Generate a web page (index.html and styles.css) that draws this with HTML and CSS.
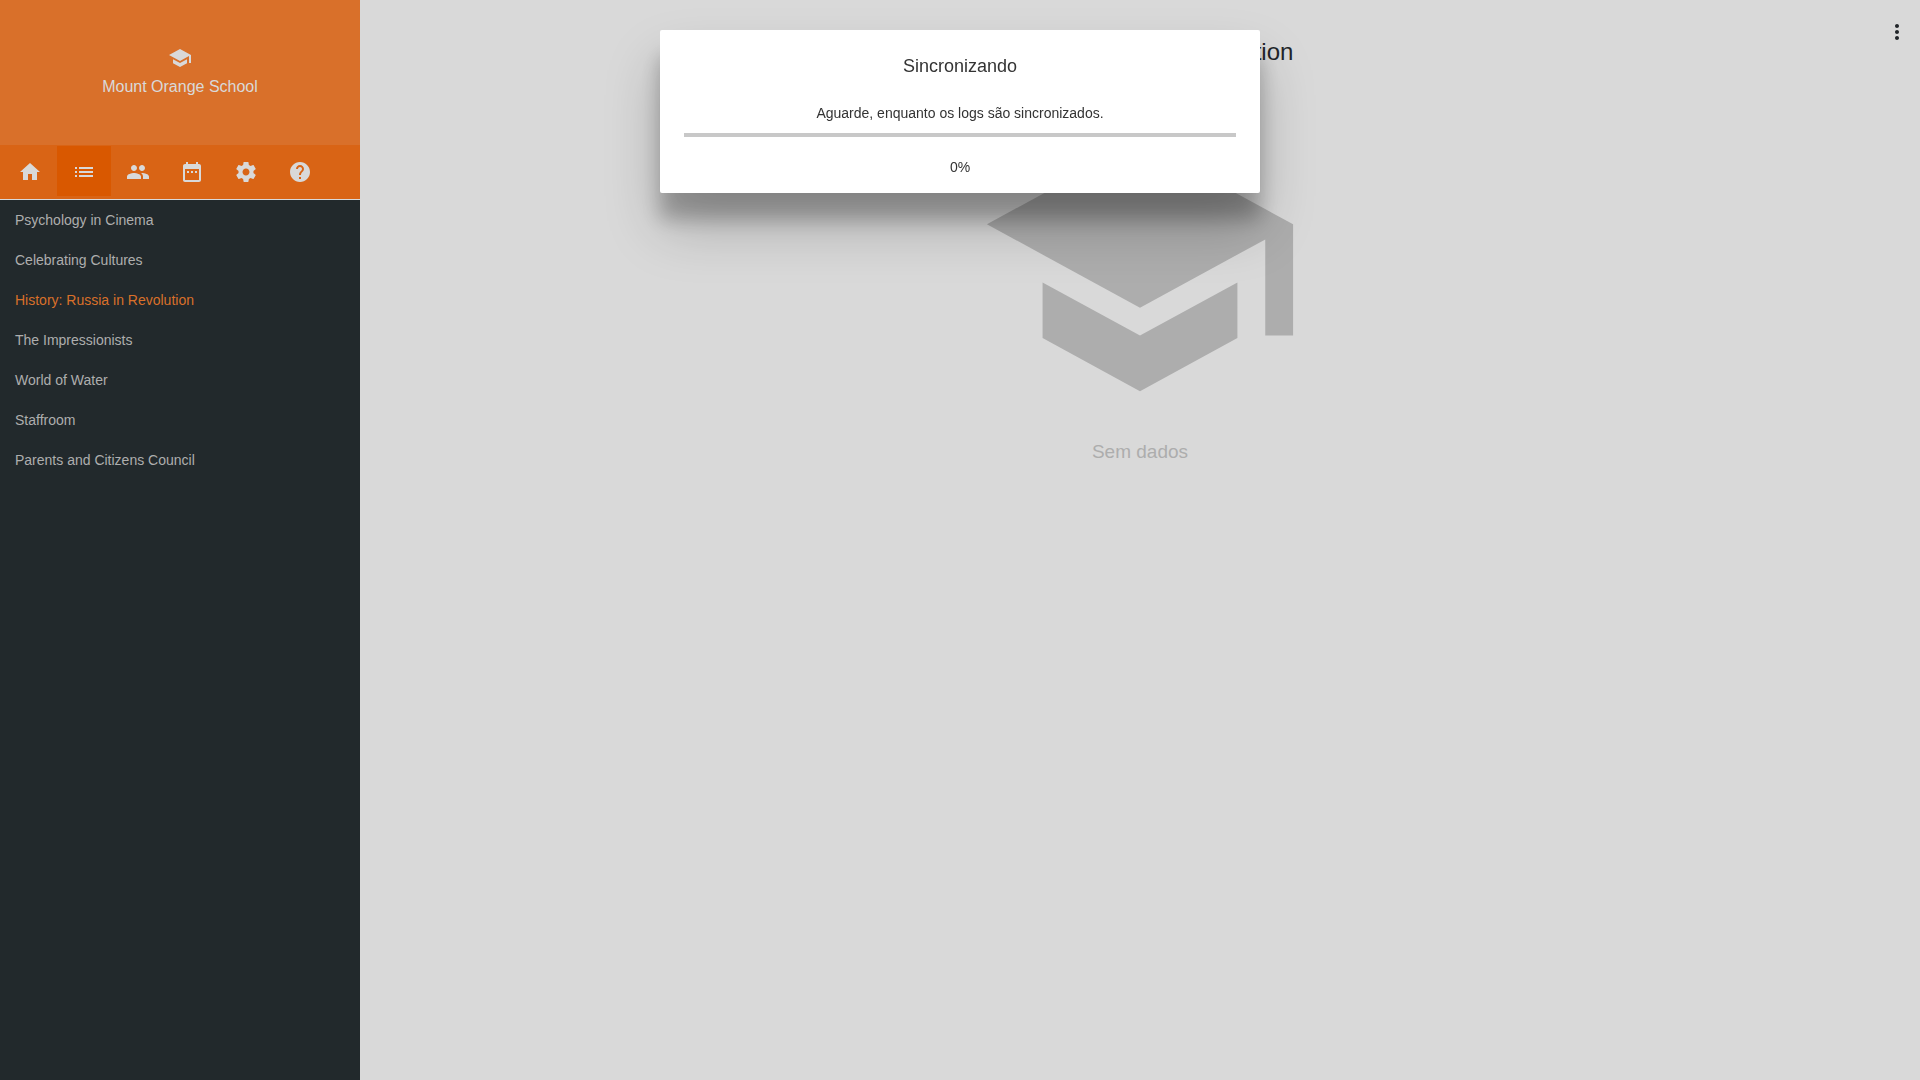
FILE: index.html
```html
<!DOCTYPE html>
<html lang="pt-BR">
<head>
<meta charset="utf-8">
<meta name="viewport" content="width=device-width, initial-scale=1">
<title>Mount Orange School</title>
<link rel="stylesheet" href="styles.css">
</head>
<body>
<div class="app">
  <aside class="sidebar">
    <header class="brand">
      <svg class="icon" viewBox="0 0 24 24" aria-hidden="true"><path d="M5 13.18v4L12 21l7-3.82v-4L12 17l-7-3.82zM12 3L1 9l11 6 9-4.91V17h2V9L12 3z"/></svg>
      <span class="brand-name">Mount Orange School</span>
    </header>
    <nav class="tabs" aria-label="Menu">
      <button class="tab" type="button" aria-label="Início"><svg class="icon" viewBox="0 0 24 24"><path d="M10 20v-6h4v6h5v-8h3L12 3 2 12h3v8z"/></svg></button>
      <button class="tab tab-active" type="button" aria-label="Cursos"><svg class="icon" viewBox="0 0 24 24"><path d="M3 13h2v-2H3v2zm0 4h2v-2H3v2zm0-8h2V7H3v2zm4 4h14v-2H7v2zm0 4h14v-2H7v2zM7 7v2h14V7H7z"/></svg></button>
      <button class="tab" type="button" aria-label="Participantes"><svg class="icon" viewBox="0 0 24 24"><path d="M16 11c1.66 0 2.99-1.34 2.99-3S17.66 5 16 5c-1.66 0-3 1.34-3 3s1.34 3 3 3zm-8 0c1.66 0 2.99-1.34 2.99-3S9.66 5 8 5C6.34 5 5 6.34 5 8s1.34 3 3 3zm0 2c-2.33 0-7 1.17-7 3.5V19h14v-2.5c0-2.33-4.67-3.5-7-3.5zm8 0c-.29 0-.62.02-.97.05 1.16.84 1.97 1.97 1.97 3.45V19h6v-2.5c0-2.33-4.67-3.5-7-3.5z"/></svg></button>
      <button class="tab" type="button" aria-label="Calendário"><svg class="icon" viewBox="0 0 24 24"><path d="M9 11H7v2h2v-2zm4 0h-2v2h2v-2zm4 0h-2v2h2v-2zm2-7h-1V2h-2v2H8V2H6v2H5c-1.11 0-1.99.9-1.99 2L3 20c0 1.1.89 2 2 2h14c1.1 0 2-.9 2-2V6c0-1.1-.9-2-2-2zm0 16H5V9h14v11z"/></svg></button>
      <button class="tab" type="button" aria-label="Configurações"><svg class="icon" viewBox="0 0 24 24"><path d="M19.43 12.98c.04-.32.07-.64.07-.98s-.03-.66-.07-.98l2.11-1.65c.19-.15.24-.42.12-.64l-2-3.46c-.12-.22-.39-.3-.61-.22l-2.49 1c-.52-.4-1.08-.73-1.69-.98l-.38-2.65C14.46 2.18 14.25 2 14 2h-4c-.25 0-.46.18-.49.42l-.38 2.65c-.61.25-1.17.59-1.69.98l-2.49-1c-.23-.09-.49 0-.61.22l-2 3.46c-.13.22-.07.49.12.64l2.11 1.65c-.04.32-.07.65-.07.98s.03.66.07.98l-2.11 1.65c-.19.15-.24.42-.12.64l2 3.46c.12.22.39.3.61.22l2.49-1c.52.4 1.08.73 1.69.98l.38 2.65c.03.24.24.42.49.42h4c.25 0 .46-.18.49-.42l.38-2.65c.61-.25 1.17-.59 1.69-.98l2.49 1c.23.09.49 0 .61-.22l2-3.46c.12-.22.07-.49-.12-.64l-2.11-1.65zM12 15.5c-1.93 0-3.5-1.57-3.5-3.5s1.57-3.5 3.5-3.5 3.5 1.57 3.5 3.5-1.57 3.5-3.5 3.5z"/></svg></button>
      <button class="tab" type="button" aria-label="Ajuda"><svg class="icon" viewBox="0 0 24 24"><path d="M12 2C6.48 2 2 6.48 2 12s4.48 10 10 10 10-4.48 10-10S17.52 2 12 2zm1 17h-2v-2h2v2zm2.07-7.75l-.9.92C13.45 12.9 13 13.5 13 15h-2v-.5c0-1.1.45-2.1 1.17-2.83l1.24-1.26c.37-.36.59-.86.59-1.41 0-1.1-.9-2-2-2s-2 .9-2 2H8c0-2.21 1.79-4 4-4s4 1.79 4 4c0 .88-.36 1.68-.93 2.25z"/></svg></button>
    </nav>
    <ul class="courses">
      <li><a class="course" href="#">Psychology in Cinema</a></li>
      <li><a class="course" href="#">Celebrating Cultures</a></li>
      <li><a class="course course-active" href="#">History: Russia in Revolution</a></li>
      <li><a class="course" href="#">The Impressionists</a></li>
      <li><a class="course" href="#">World of Water</a></li>
      <li><a class="course" href="#">Staffroom</a></li>
      <li><a class="course" href="#">Parents and Citizens Council</a></li>
    </ul>
  </aside>
  <main class="content">
    <button class="more" type="button" aria-label="Mais opções"><svg class="icon" viewBox="0 0 24 24"><path d="M12 8c1.1 0 2-.9 2-2s-.9-2-2-2-2 .9-2 2 .9 2 2 2zm0 2c-1.1 0-2 .9-2 2s.9 2 2 2 2-.9 2-2-.9-2-2-2zm0 6c-1.1 0-2 .9-2 2s.9 2 2 2 2-.9 2-2-.9-2-2-2z"/></svg></button>
    <h1 class="title">History: Russia in Revolution</h1>
    <div class="empty">
      <svg class="empty-icon" viewBox="0 0 24 24" aria-hidden="true"><path d="M5 13.18v4L12 21l7-3.82v-4L12 17l-7-3.82zM12 3L1 9l11 6 9-4.91V17h2V9L12 3z"/></svg>
      <p class="empty-text">Sem dados</p>
    </div>
  </main>
</div>
<div class="overlay">
  <section class="dialog" role="dialog" aria-modal="true" aria-labelledby="sync-title">
    <h2 class="dialog-title" id="sync-title">Sincronizando</h2>
    <label class="dialog-text" for="sync-progress">Aguarde, enquanto os logs são sincronizados.</label>
    <progress class="bar" id="sync-progress" value="0" max="100"></progress>
    <p class="dialog-text">0%</p>
  </section>
</div>
</body>
</html>
```
FILE: styles.css
```css
* {
  box-sizing: border-box;
}

body {
  margin: 0;
  font-family: "Liberation Sans", Arial, sans-serif;
  font-size: 14px;
  line-height: 20px;
  color: #212529;
  background: #d9d9d9;
}

h1, h2, p, ul {
  margin: 0;
  padding: 0;
}

button {
  padding: 0;
  border: 0;
  background: none;
  color: inherit;
  cursor: pointer;
}

.icon {
  display: block;
  width: 24px;
  height: 24px;
  fill: currentColor;
}

.app {
  display: flex;
  min-height: 100vh;
}

.sidebar {
  flex: 0 0 360px;
  background: #22292c;
  color: #d9d9d9;
}

.brand {
  display: flex;
  flex-direction: column;
  align-items: center;
  justify-content: center;
  gap: 5px;
  height: 145px;
  background: #d9702a;
}

.brand-name {
  font-size: 16px;
  line-height: 24px;
}

.tabs {
  display: flex;
  height: 55px;
  padding: 1px 3px 3px;
  background: #d96415;
  border-bottom: 1px solid #d9d9d9;
}

.tab {
  display: flex;
  align-items: center;
  justify-content: center;
  width: 54px;
  height: 50px;
  padding-top: 2px;
}

.tab-active {
  background: #d95800;
}

.courses {
  list-style: none;
}

.course {
  display: block;
  padding: 10px 15px;
  color: #aeaeae;
  text-decoration: none;
}

.course-active {
  color: #d9702a;
}

.content {
  position: relative;
  flex: 1;
  padding-top: 36px;
  text-align: center;
}

.more {
  position: absolute;
  top: 20px;
  right: 11px;
}

.title {
  font-size: 24px;
  font-weight: 400;
  line-height: 32px;
}

.empty {
  display: flex;
  flex-direction: column;
  align-items: center;
  padding-top: 31px;
  color: #adadad;
}

.empty-icon {
  width: 334px;
  height: 334px;
  fill: currentColor;
}

.empty-text {
  padding-top: 7px;
  font-size: 19px;
  line-height: 24px;
}

.overlay {
  position: fixed;
  inset: 0;
  display: flex;
  align-items: flex-start;
  justify-content: center;
  padding: 30px;
}

.dialog {
  display: flex;
  flex-direction: column;
  align-items: stretch;
  width: 600px;
  padding: 24px 24px 16px;
  border-radius: 2px;
  background: #fff;
  color: #333;
  text-align: center;
  box-shadow: 0 26px 20px rgba(0, 0, 0, .24), 0 34px 56px rgba(0, 0, 0, .22);
}

.dialog-title {
  padding-bottom: 25px;
  font-size: 18px;
  font-weight: 400;
  line-height: 24px;
}

.bar {
  appearance: none;
  width: 100%;
  height: 4px;
  margin: 10px 0 20px;
  border: 0;
  background: #c8c8c8;
}

.bar::-webkit-progress-bar {
  background: #c8c8c8;
}

.bar::-webkit-progress-value {
  background: #d95800;
}
```
